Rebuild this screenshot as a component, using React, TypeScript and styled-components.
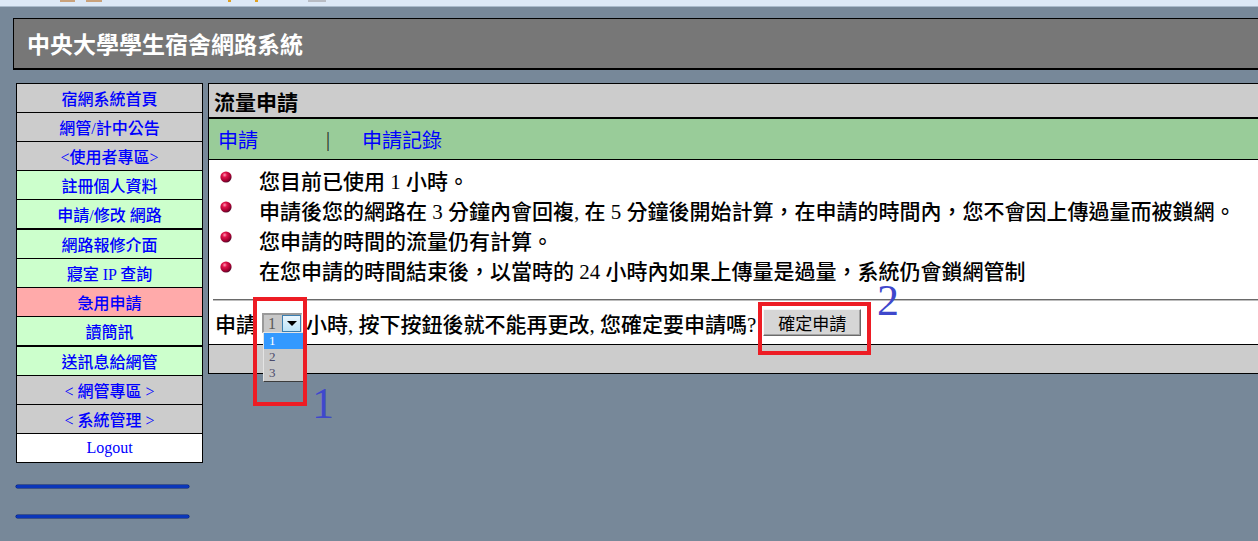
import React from 'react'
import styled, { createGlobalStyle } from 'styled-components'

const GlobalStyle = createGlobalStyle`
    html, body {
        margin: 0;
        padding: 0;
    }

    body {
        width: 1258px;
        height: 541px;
        overflow: hidden;
        background: #778899;
        font-family: "Liberation Serif", "Noto Sans CJK TC", serif;
    }
`

const Root = styled.div`
    position: relative;
    height: 541px;
`

const TopStrip = styled.div`
    height: 6px;
    background: #dce8f6;
    border-bottom: 1px solid #a9bacb;
    display: flex;
    align-items: flex-start;
    overflow: hidden;
`

const StripBit = styled.span<{ $gap: number; $w: number; $c: string }>`
    display: block;
    flex: none;
    margin-left: ${p => p.$gap}px;
    width: ${p => p.$w}px;
    height: 2px;
    background: ${p => p.$c};
`

const Page = styled.div`
    padding: 11px 0 0 13px;
`

const Header = styled.div`
    width: 1300px;
    height: 49px;
    padding-left: 13px;
    background: #777777;
    border: 1px solid #000;
    border-bottom-width: 2px;
    display: flex;
    align-items: center;
`

const SiteTitle = styled.h1`
    margin: 0;
    color: #fff;
    font-family: "Noto Sans CJK TC", sans-serif;
    font-size: 23px;
    font-weight: bold;
    line-height: 1;
`

const Columns = styled.div`
    display: flex;
    align-items: flex-start;
    margin-top: 13px;
`

const SideColumn = styled.div`
    flex: none;
    margin-left: 3px;
    width: 187px;
`

const Menu = styled.ul`
    list-style: none;
    margin: 0;
    padding: 0;
    border: 1px solid #000;
`

const MenuItem = styled.li<{ $bg: string; $thick?: boolean }>`
    height: 28px;
    display: flex;
    align-items: center;
    justify-content: center;
    background: ${p => p.$bg};
    border-top: ${p => (p.$thick ? 2 : 1)}px solid #000;
    color: #0000ff;
    font-size: 16px;
    font-weight: 500;

    &:first-child {
        border-top: none;
    }
`

const BlueRule = styled.div<{ $top: number }>`
    margin-top: ${p => p.$top}px;
    width: 173px;
    height: 3px;
    border-radius: 2px;
    background: #0b36b9;
    box-shadow: 0 0 0 0.5px #051c74;
`

const Main = styled.div`
    flex: none;
    margin-left: 5px;
    width: 1100px;
    border: 1px solid #000;
    background: #fff;
`

const PanelTitle = styled.div`
    height: 33px;
    padding-left: 5px;
    background: #cccccc;
    border-bottom: 2px solid #000;
    display: flex;
    align-items: center;
    font-size: 21px;
    font-weight: bold;
`

const TabBar = styled.div`
    height: 40px;
    padding-left: 9px;
    background: #99cc99;
    border-bottom: 1px solid #000;
    display: flex;
    align-items: center;
    font-size: 20px;
`

const TabLink = styled.a`
    color: #0000ff;
    text-decoration: none;
`

const TabDivider = styled.span`
    margin: 0 32px 0 68px;
    color: #222;
`

const Content = styled.div`
    border-bottom: 1px solid #000;
`

const NoticeList = styled.ul`
    list-style: none;
    margin: 0;
    padding: 5px 0 0 11px;
`

const Notice = styled.li`
    height: 30px;
    display: flex;
    align-items: center;
    font-size: 21px;
    font-weight: 500;
    white-space: nowrap;
`

const BulletIcon = styled.svg`
    flex: none;
    margin: 0 27px 7px 0;
`

const Rule = styled.hr`
    margin: 14px 0 0 4px;
    height: 0;
    border: none;
    border-top: 1px solid #6a6a6a;
    border-bottom: 1px solid #bdbdbd;
`

const FormRow = styled.div`
    height: 43px;
    padding-left: 6px;
    display: flex;
    align-items: center;
    font-size: 21px;
    font-weight: 500;
    white-space: nowrap;
`

const Select = styled.div`
    position: relative;
    margin: 0 4px 0 5px;
    width: 40px;
    height: 20px;
    box-sizing: border-box;
    display: flex;
    background: #c8c8c8;
    border-style: solid;
    border-width: 2px 1px 1px 2px;
    border-color: #9a9a9a #d6d6d6 #d6d6d6 #9a9a9a;
`

const SelectValue = styled.span`
    flex: 1;
    padding-left: 4px;
    color: #5a5a5a;
    font-size: 16px;
    font-weight: normal;
    line-height: 17px;
`

const SelectArrow = styled.span`
    width: 19px;
    box-sizing: border-box;
    display: flex;
    align-items: center;
    justify-content: center;
    border: 1px solid #3c7fb1;
    background: linear-gradient(#eaf6fd, #bde4f9);

    &::after {
        content: '';
        border-left: 5px solid transparent;
        border-right: 5px solid transparent;
        border-top: 5px solid #000;
    }
`

const DropList = styled.ul`
    position: absolute;
    top: 100%;
    left: -1px;
    z-index: 2;
    width: 40px;
    margin: 0;
    padding: 0;
    list-style: none;
    background: #c8c8c8;
    border-style: solid;
    border-width: 1px;
    border-color: #e4e4e4 #3c3c3c #3c3c3c #e4e4e4;
`

const DropOption = styled.li<{ $active?: boolean }>`
    height: 16px;
    padding-left: 5px;
    font-size: 13px;
    font-weight: normal;
    line-height: 16px;
    color: ${p => (p.$active ? '#fff' : '#4b4b6b')};
    background: ${p => (p.$active ? '#3399ff' : 'transparent')};
`

const SubmitButton = styled.button`
    margin-left: 7px;
    height: 27px;
    padding: 0 14px;
    font-family: "Noto Sans CJK TC", sans-serif;
    font-size: 17px;
    color: #000;
    background: #d6d6d6;
    border: 1px solid;
    border-color: #f6f6f6 #6a6a6a #6a6a6a #f6f6f6;
    box-shadow: inset -1px -1px 0 #a3a3a3;
`

const Footer = styled.div`
    height: 28px;
    background: #cccccc;
`

const Marker = styled.div<{ $x: number; $y: number; $w: number; $h: number }>`
    position: absolute;
    left: ${p => p.$x}px;
    top: ${p => p.$y}px;
    width: ${p => p.$w}px;
    height: ${p => p.$h}px;
    box-sizing: border-box;
    border: 4px solid #ed1c24;
    z-index: 3;
`

const MarkerLabel = styled.span<{ $x: number; $y: number }>`
    position: absolute;
    left: ${p => p.$x}px;
    top: ${p => p.$y}px;
    font-family: "Liberation Serif", serif;
    font-size: 44px;
    line-height: 28px;
    color: #3f48cc;
    z-index: 3;
`

const menu = [
    { label: '宿網系統首頁', bg: '#cccccc' },
    { label: '網管/計中公告', bg: '#cccccc' },
    { label: '<使用者專區>', bg: '#cccccc' },
    { label: '註冊個人資料', bg: '#ccffcc' },
    { label: '申請/修改 網路', bg: '#ccffcc' },
    { label: '網路報修介面', bg: '#ccffcc', thick: true },
    { label: '寢室 IP 查詢', bg: '#ccffcc' },
    { label: '急用申請', bg: '#ffaaaa' },
    { label: '讀簡訊', bg: '#ccffcc' },
    { label: '送訊息給網管', bg: '#ccffcc', thick: true },
    { label: '< 網管專區 >', bg: '#cccccc' },
    { label: '< 系統管理 >', bg: '#cccccc' },
    { label: 'Logout', bg: '#ffffff' },
]

const notices = [
    '您目前已使用 1 小時。',
    '申請後您的網路在 3 分鐘內會回複, 在 5 分鐘後開始計算，在申請的時間內，您不會因上傳過量而被鎖網。',
    '您申請的時間的流量仍有計算。',
    '在您申請的時間結束後，以當時的 24 小時內如果上傳量是過量，系統仍會鎖網管制',
]

const Bullet = () => (
    <BulletIcon width="12" height="12" viewBox="0 0 12 12">
        <defs>
            <radialGradient id="ball" cx="0.38" cy="0.32" r="0.7">
                <stop offset="0" stopColor="#ff9fb8" />
                <stop offset="0.3" stopColor="#e0134a" />
                <stop offset="0.75" stopColor="#a00030" />
                <stop offset="1" stopColor="#4d0a2a" />
            </radialGradient>
        </defs>
        <circle cx="6" cy="6" r="5.6" fill="url(#ball)" />
    </BulletIcon>
)

export default function App() {
    return (
        <Root>
            <GlobalStyle />
            <TopStrip>
                <StripBit $gap={60} $w={15} $c="#c9a27c" />
                <StripBit $gap={11} $w={16} $c="#c9a27c" />
                <StripBit $gap={126} $w={3} $c="#e0a020" />
                <StripBit $gap={24} $w={3} $c="#e0a020" />
                <StripBit $gap={50} $w={18} $c="#b8bcc4" />
            </TopStrip>
            <Page>
                <Header>
                    <SiteTitle>中央大學學生宿舍網路系統</SiteTitle>
                </Header>
                <Columns>
                    <SideColumn>
                        <Menu>
                            {menu.map(item => (
                                <MenuItem key={item.label} $bg={item.bg} $thick={item.thick}>
                                    {item.label}
                                </MenuItem>
                            ))}
                        </Menu>
                        <BlueRule $top={22} />
                        <BlueRule $top={27} />
                    </SideColumn>
                    <Main>
                        <PanelTitle>流量申請</PanelTitle>
                        <TabBar>
                            <TabLink href="#">申請</TabLink>
                            <TabDivider>|</TabDivider>
                            <TabLink href="#">申請記錄</TabLink>
                        </TabBar>
                        <Content>
                            <NoticeList>
                                {notices.map(text => (
                                    <Notice key={text}>
                                        <Bullet />
                                        {text}
                                    </Notice>
                                ))}
                            </NoticeList>
                            <Rule />
                            <FormRow>
                                申請
                                <Select>
                                    <SelectValue>1</SelectValue>
                                    <SelectArrow />
                                    <DropList>
                                        <DropOption $active>1</DropOption>
                                        <DropOption>2</DropOption>
                                        <DropOption>3</DropOption>
                                    </DropList>
                                </Select>
                                小時, 按下按鈕後就不能再更改, 您確定要申請嗎?
                                <SubmitButton>確定申請</SubmitButton>
                            </FormRow>
                        </Content>
                        <Footer />
                    </Main>
                </Columns>
            </Page>
            <Marker $x={253} $y={297} $w={54} $h={109} />
            <MarkerLabel $x={312} $y={390}>1</MarkerLabel>
            <Marker $x={758} $y={302} $w={113} $h={53} />
            <MarkerLabel $x={877} $y={287}>2</MarkerLabel>
        </Root>
    )
}
